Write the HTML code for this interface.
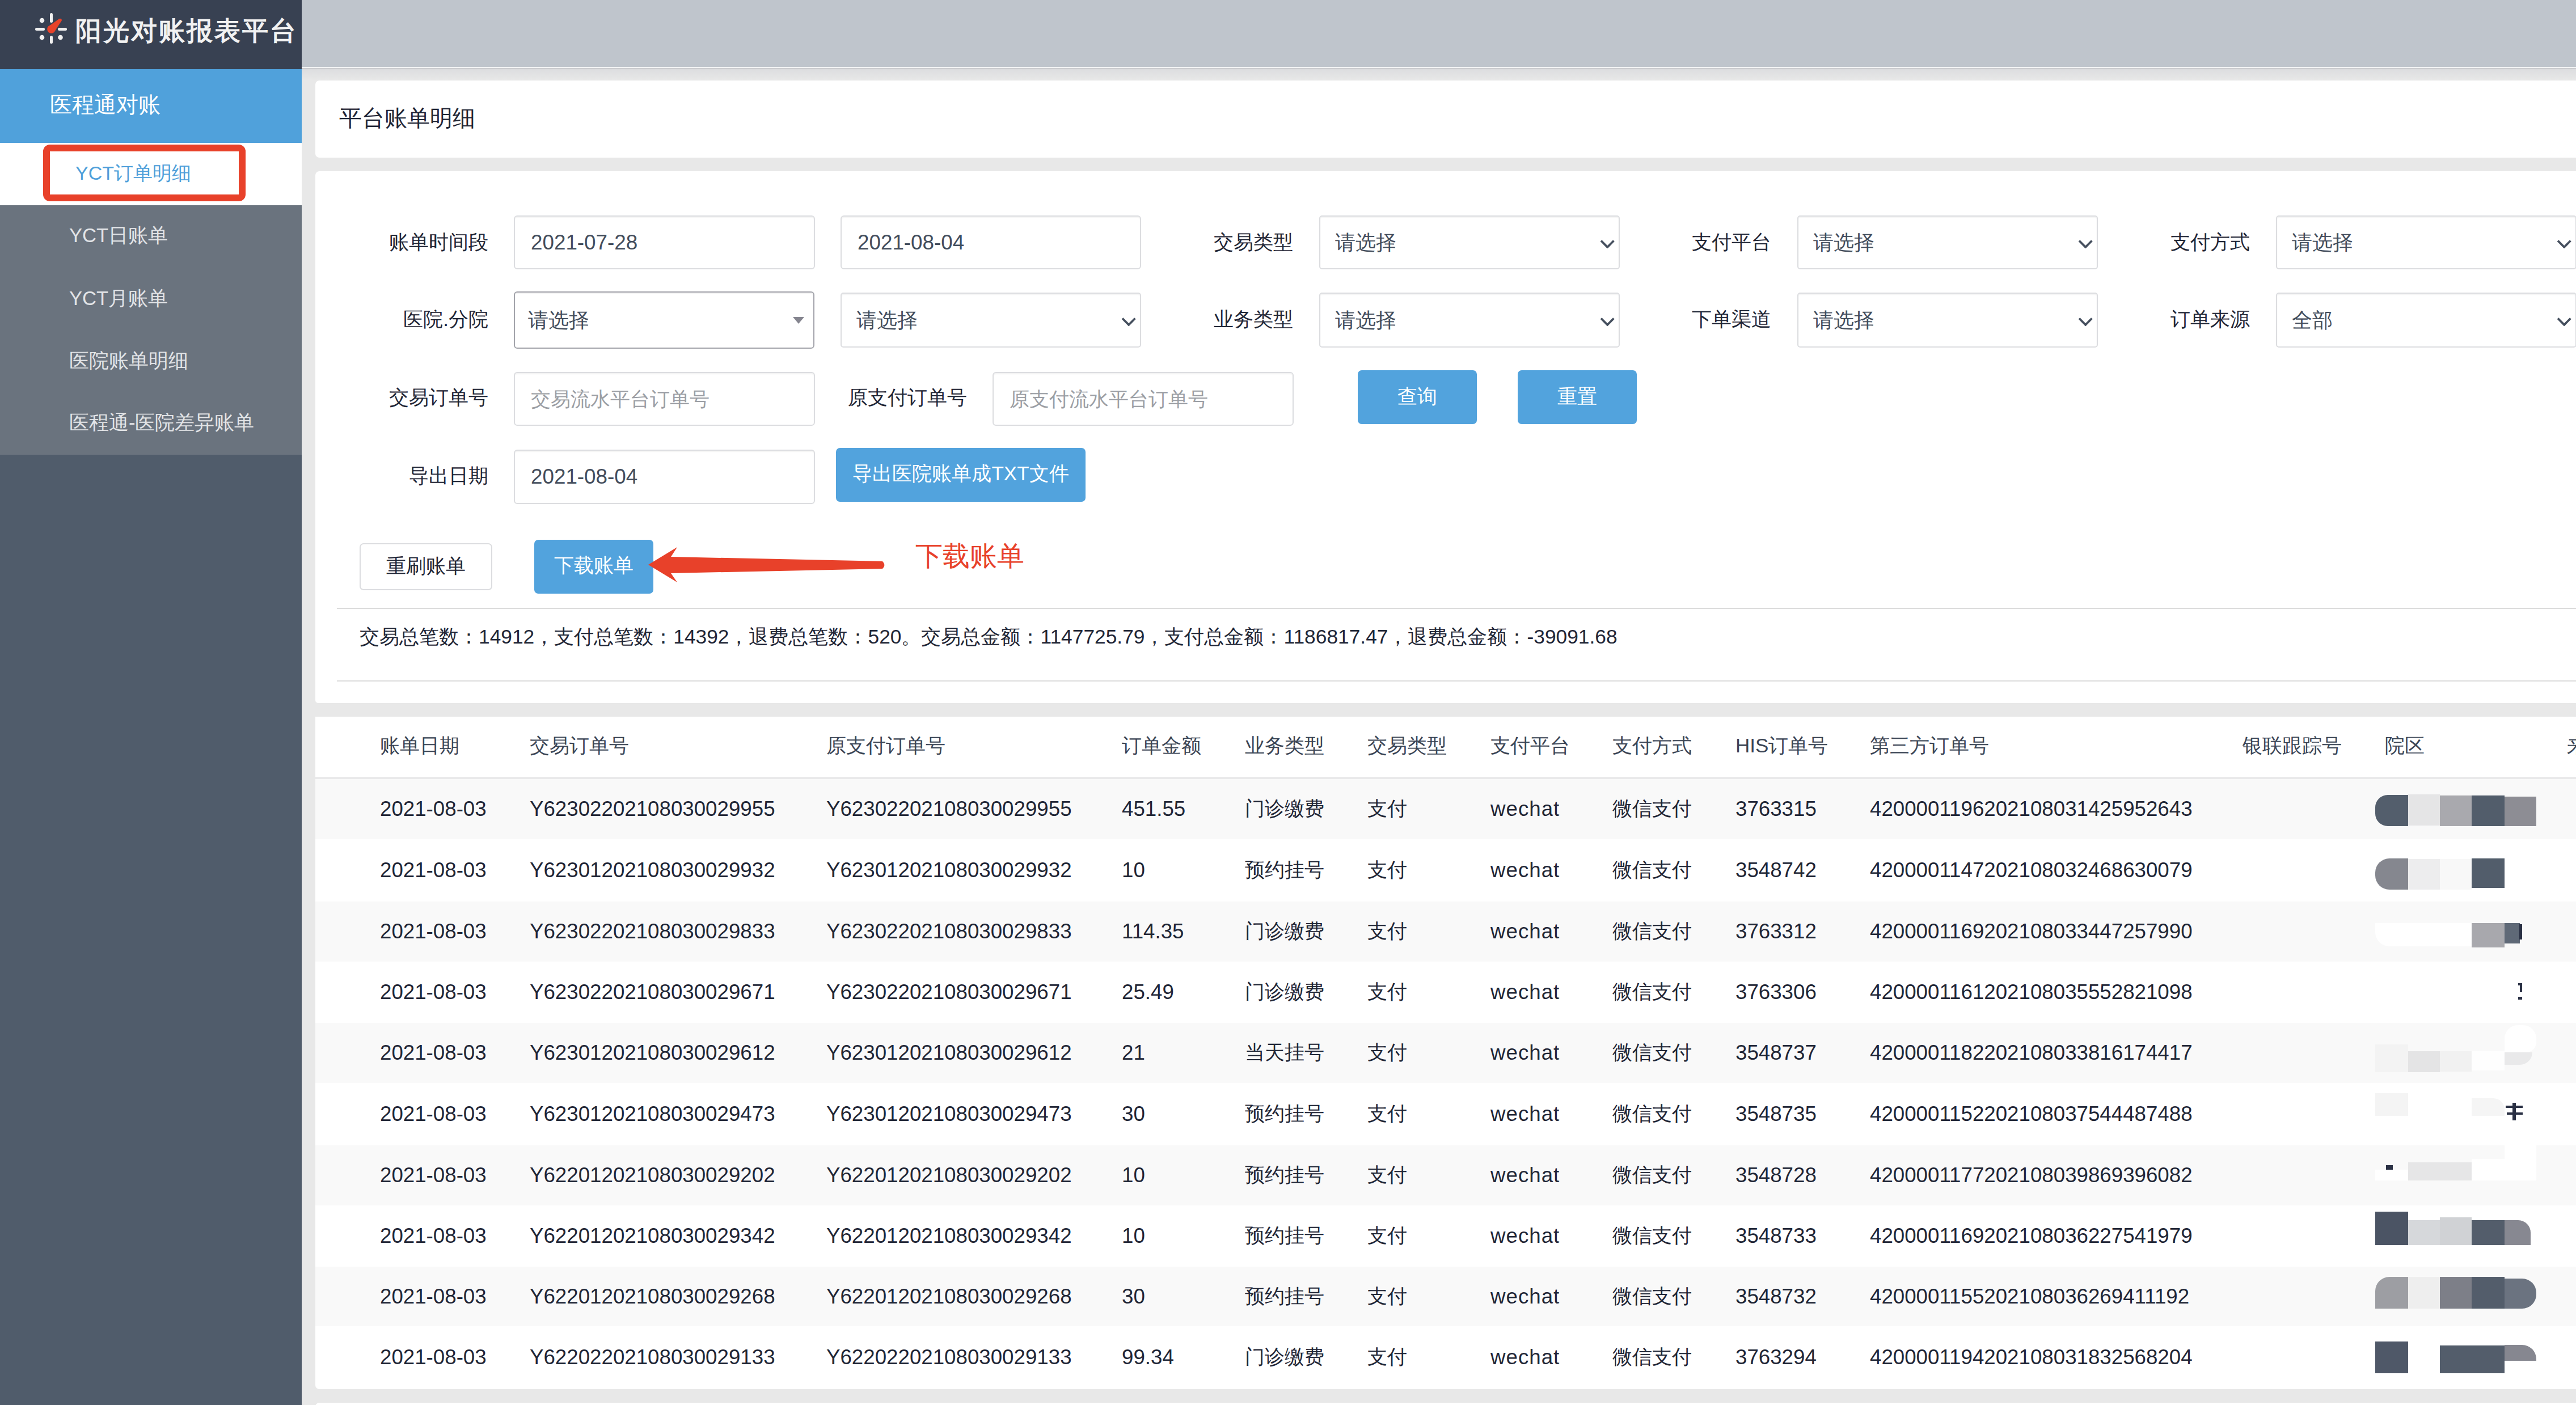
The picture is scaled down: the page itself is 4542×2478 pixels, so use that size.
<!DOCTYPE html>
<html><head><meta charset="utf-8">
<style>
*{box-sizing:border-box;margin:0;padding:0}
html,body{width:4542px;height:2478px;overflow:hidden}
body{position:relative;background:#e8e8e8;font-family:"Liberation Sans",sans-serif;color:#1f2636;line-height:1}
.a{position:absolute;white-space:nowrap}
.card{position:absolute;left:556px;width:4100px;background:#fff;border-radius:7px}
.lbl{position:absolute;font-size:35px;color:#1f2636;text-align:right;white-space:nowrap}
.inp{position:absolute;border:2px solid #dcdde0;border-radius:6px;background:#fff;box-shadow:inset 0 2px 2px rgba(0,0,0,.05)}
.inp span{position:absolute;left:28px;top:0;font-size:36px;color:#434d5c;white-space:nowrap}
.inp span.ph{color:#9b9ea4;font-size:35px}
.inp span.d{font-size:36.8px}
.chev{position:absolute;width:26px;height:16px}
.btn{position:absolute;background:#52a3dd;color:#fff;border-radius:7px;font-size:35px;text-align:center;white-space:nowrap}
.hr{position:absolute;left:594px;width:3948px;height:2px;background:#dcdcdc}
.th{position:absolute;top:1297px;font-size:35px;color:#3b4555;white-space:nowrap}
.row{position:absolute;left:556px;width:3986px}
.row.s{background:#f9f9f9}
.td{position:absolute;font-size:36.7px;color:#1f2636;white-space:nowrap}
.td.c{font-size:35px;margin-top:-1px}
.td.w{letter-spacing:1px}
.td.o{letter-spacing:0}
</style></head><body>
<div class="a" style="left:532px;top:0px;width:4010px;height:118px;background:#bfc5cc;"></div>
<div class="a" style="left:532px;top:118px;width:4010px;height:2px;background:#f2f3f4;"></div>
<div class="a" style="left:532px;top:120px;width:4010px;height:1px;background:#c4c5c8;"></div>
<div class="a" style="left:532px;top:121px;width:4010px;height:21px;background:linear-gradient(#dcdddf,#e8e8e8);"></div>
<div class="a" style="left:0px;top:0px;width:532px;height:122px;background:#384152;"></div>
<div class="a" style="left:0px;top:122px;width:532px;height:2356px;background:#505c6b;"></div>
<svg class="a" style="left:0;top:0" width="532" height="122" viewBox="0 0 532 122">
 <g fill="#f0f0f0">
  <rect x="88" y="23" width="5" height="17" rx="2.5"/>
  <rect x="88" y="63" width="5" height="14" rx="2.5"/>
  <rect x="62" y="49" width="17" height="5" rx="2.5"/>
  <rect x="102" y="49" width="16" height="5" rx="2.5"/>
  <circle cx="74" cy="36" r="4.3"/>
  <circle cx="74" cy="66" r="4.3"/>
  <circle cx="106.5" cy="66" r="4.3"/>
 </g>
 <circle cx="90.5" cy="51.5" r="7.3" fill="#e8432a"/><circle cx="106" cy="35.5" r="2.8" fill="#e8432a"/><path d="M87 45.5 L104.5 33 L108 37.5 L96.5 55 Z" fill="#e8432a"/>
</svg>
<div class="a" style="left:133px;top:31px;font-size:46px;color:#f2f2f2;letter-spacing:3px;-webkit-text-stroke:1.4px #f2f2f2">阳光对账报表平台</div>
<div class="a" style="left:0px;top:122px;width:532px;height:130px;background:#50a1db;"></div>
<div class="a" style="left:88px;top:165px;font-size:39px;color:#fff;">医程通对账</div>
<div class="a" style="left:0px;top:252px;width:532px;height:110px;background:#fff;"></div>
<div class="a" style="left:0px;top:362px;width:532px;height:440px;background:#6a737e;"></div>
<div class="a" style="left:133px;top:288px;font-size:34px;color:#4e9fda;">YCT订单明细</div>
<div class="a" style="left:76px;top:255px;width:357px;height:100px;border:12px solid #e8412a;border-radius:12px"></div>
<div class="a" style="left:122px;top:398px;font-size:34.5px;color:#e2e4e7;">YCT日账单</div>
<div class="a" style="left:122px;top:509px;font-size:34.5px;color:#e2e4e7;">YCT月账单</div>
<div class="a" style="left:122px;top:619px;font-size:34.5px;color:#e2e4e7;">医院账单明细</div>
<div class="a" style="left:122px;top:728px;font-size:34.5px;color:#e2e4e7;">医程通-医院差异账单</div>
<div class="card" style="top:142px;height:136px"></div>
<div class="a" style="left:598px;top:188px;font-size:40px;color:#1f2535;">平台账单明细</div>
<div class="card" style="top:302px;height:938px;border-radius:7px 7px 5px 5px"></div>
<div class="lbl" style="right:3681px;top:409px">账单时间段</div>
<div class="inp" style="left:906px;top:380px;width:531px;height:95px"><span class="d" style="left:28px;line-height:91px">2021-07-28</span></div>
<div class="inp" style="left:1482px;top:380px;width:530px;height:95px"><span class="d" style="left:28px;line-height:91px">2021-08-04</span></div>
<div class="lbl" style="right:2262px;top:409px">交易类型</div>
<div class="inp" style="border-radius:5px;left:2326px;top:380px;width:530px;height:95px"><span class="" style="left:26px;line-height:91px">请选择</span><svg class="chev" viewBox="0 0 26 16" style="left:492.8px;top:40.3px"><path d="M2 2.5 L13.2 13.9 L24.4 2.5" fill="none" stroke="#454f5e" stroke-width="3.8"/></svg></div>
<div class="lbl" style="right:1419px;top:409px">支付平台</div>
<div class="inp" style="border-radius:5px;left:3169px;top:380px;width:530px;height:95px"><span class="" style="left:26px;line-height:91px">请选择</span><svg class="chev" viewBox="0 0 26 16" style="left:492.8px;top:40.3px"><path d="M2 2.5 L13.2 13.9 L24.4 2.5" fill="none" stroke="#454f5e" stroke-width="3.8"/></svg></div>
<div class="lbl" style="right:575px;top:409px">支付方式</div>
<div class="inp" style="border-radius:5px;left:4013px;top:380px;width:530px;height:95px"><span class="" style="left:26px;line-height:91px">请选择</span><svg class="chev" viewBox="0 0 26 16" style="left:492.8px;top:40.3px"><path d="M2 2.5 L13.2 13.9 L24.4 2.5" fill="none" stroke="#454f5e" stroke-width="3.8"/></svg></div>
<div class="lbl" style="right:3681px;top:545px">医院.分院</div>
<div class="inp" style="left:906px;top:514px;width:530px;height:101px;border-color:#a2a3aa"><span class="" style="left:23px;line-height:97px">请选择</span><svg style="position:absolute;left:490px;top:42.5px" width="20" height="12"><path d="M0 0H20L10 12Z" fill="#85858f"/></svg></div>
<div class="inp" style="border-radius:5px;left:1482px;top:516px;width:530px;height:97px"><span class="" style="left:26px;line-height:93px">请选择</span><svg class="chev" viewBox="0 0 26 16" style="left:492.8px;top:41.3px"><path d="M2 2.5 L13.2 13.9 L24.4 2.5" fill="none" stroke="#454f5e" stroke-width="3.8"/></svg></div>
<div class="lbl" style="right:2262px;top:545px">业务类型</div>
<div class="inp" style="border-radius:5px;left:2326px;top:516px;width:530px;height:97px"><span class="" style="left:26px;line-height:93px">请选择</span><svg class="chev" viewBox="0 0 26 16" style="left:492.8px;top:41.3px"><path d="M2 2.5 L13.2 13.9 L24.4 2.5" fill="none" stroke="#454f5e" stroke-width="3.8"/></svg></div>
<div class="lbl" style="right:1419px;top:545px">下单渠道</div>
<div class="inp" style="border-radius:5px;left:3169px;top:516px;width:530px;height:97px"><span class="" style="left:26px;line-height:93px">请选择</span><svg class="chev" viewBox="0 0 26 16" style="left:492.8px;top:41.3px"><path d="M2 2.5 L13.2 13.9 L24.4 2.5" fill="none" stroke="#454f5e" stroke-width="3.8"/></svg></div>
<div class="lbl" style="right:575px;top:545px">订单来源</div>
<div class="inp" style="border-radius:5px;left:4013px;top:516px;width:530px;height:97px"><span class="" style="left:26px;line-height:93px">全部</span><svg class="chev" viewBox="0 0 26 16" style="left:492.8px;top:41.3px"><path d="M2 2.5 L13.2 13.9 L24.4 2.5" fill="none" stroke="#454f5e" stroke-width="3.8"/></svg></div>
<div class="lbl" style="right:3681px;top:683px">交易订单号</div>
<div class="inp" style="left:906px;top:656px;width:531px;height:95px"><span class="ph" style="left:28px;line-height:91px">交易流水平台订单号</span></div>
<div class="lbl" style="right:2837px;top:683px">原支付订单号</div>
<div class="inp" style="left:1750px;top:656px;width:531px;height:95px"><span class="ph" style="left:28px;line-height:91px">原支付流水平台订单号</span></div>
<div class="btn" style="left:2394px;top:653px;width:210px;height:95px;line-height:91px">查询</div>
<div class="btn" style="left:2676px;top:653px;width:210px;height:95px;line-height:91px">重置</div>
<div class="lbl" style="right:3681px;top:821px">导出日期</div>
<div class="inp" style="left:906px;top:793px;width:531px;height:96px"><span class="d" style="left:28px;line-height:92px">2021-08-04</span></div>
<div class="btn" style="left:1474px;top:790px;width:440px;height:95px;line-height:89px">导出医院账单成TXT文件</div>
<div class="btn" style="left:634px;top:958px;width:234px;height:83px;line-height:76px;background:#fff;border:2px solid #dcdde0;color:#1f2636">重刷账单</div>
<div class="btn" style="left:942px;top:952px;width:210px;height:95px;line-height:90px">下载账单</div>
<svg class="a" style="left:1130px;top:950px" width="440" height="90" viewBox="1130 950 440 90">
<path d="M1143 996 L1194 965 L1183 982 L1556 990 Q1563 996.5 1556 1003 L1183 1011 L1194 1027 Z" fill="#e8412a"/></svg>
<div class="a" style="left:1614px;top:957px;font-size:48px;color:#e8412a;">下载账单</div>
<div class="hr" style="top:1072px"></div>
<div class="a" style="left:634px;top:1105px;font-size:35.35px;color:#1f2636;">交易总笔数：14912，支付总笔数：14392，退费总笔数：520。交易总金额：1147725.79，支付总金额：1186817.47，退费总金额：-39091.68</div>
<div class="hr" style="top:1200px"></div>
<div class="card" style="top:1264px;height:1185.7px;border-radius:0 0 7px 7px"></div>
<div class="card" style="top:2474px;height:200px"></div>
<div class="th" style="left:670px">账单日期</div>
<div class="th" style="left:934px">交易订单号</div>
<div class="th" style="left:1457px">原支付订单号</div>
<div class="th" style="left:1978px">订单金额</div>
<div class="th" style="left:2195px">业务类型</div>
<div class="th" style="left:2411px">交易类型</div>
<div class="th" style="left:2628px">支付平台</div>
<div class="th" style="left:2843px">支付方式</div>
<div class="th" style="left:3060px">HIS订单号</div>
<div class="th" style="left:3297px">第三方订单号</div>
<div class="th" style="left:3954px">银联跟踪号</div>
<div class="th" style="left:4205px">院区</div>
<div class="th" style="left:4526px">来源</div>
<div class="a" style="left:556px;top:1370px;width:3986px;height:3.6px;background:#e9e9ea"></div>
<div class="row s" style="top:1373.6px;height:106.0px;line-height:106.0px">
<div class="td" style="left:114px">2021-08-03</div>
<div class="td o" style="left:378px">Y62302202108030029955</div>
<div class="td o" style="left:901px">Y62302202108030029955</div>
<div class="td" style="left:1422px">451.55</div>
<div class="td c" style="left:1639px">门诊缴费</div>
<div class="td c" style="left:1855px">支付</div>
<div class="td w" style="left:2072px">wechat</div>
<div class="td c" style="left:2287px">微信支付</div>
<div class="td" style="left:2504px">3763315</div>
<div class="td" style="left:2741px">4200001196202108031425952643</div>
</div>
<div class="row" style="top:1479.6px;height:110.2px;line-height:110.2px">
<div class="td" style="left:114px">2021-08-03</div>
<div class="td o" style="left:378px">Y62301202108030029932</div>
<div class="td o" style="left:901px">Y62301202108030029932</div>
<div class="td" style="left:1422px">10</div>
<div class="td c" style="left:1639px">预约挂号</div>
<div class="td c" style="left:1855px">支付</div>
<div class="td w" style="left:2072px">wechat</div>
<div class="td c" style="left:2287px">微信支付</div>
<div class="td" style="left:2504px">3548742</div>
<div class="td" style="left:2741px">4200001147202108032468630079</div>
</div>
<div class="row s" style="top:1589.8px;height:106.0px;line-height:106.0px">
<div class="td" style="left:114px">2021-08-03</div>
<div class="td o" style="left:378px">Y62302202108030029833</div>
<div class="td o" style="left:901px">Y62302202108030029833</div>
<div class="td" style="left:1422px">114.35</div>
<div class="td c" style="left:1639px">门诊缴费</div>
<div class="td c" style="left:1855px">支付</div>
<div class="td w" style="left:2072px">wechat</div>
<div class="td c" style="left:2287px">微信支付</div>
<div class="td" style="left:2504px">3763312</div>
<div class="td" style="left:2741px">4200001169202108033447257990</div>
</div>
<div class="row" style="top:1695.8px;height:107.8px;line-height:107.8px">
<div class="td" style="left:114px">2021-08-03</div>
<div class="td o" style="left:378px">Y62302202108030029671</div>
<div class="td o" style="left:901px">Y62302202108030029671</div>
<div class="td" style="left:1422px">25.49</div>
<div class="td c" style="left:1639px">门诊缴费</div>
<div class="td c" style="left:1855px">支付</div>
<div class="td w" style="left:2072px">wechat</div>
<div class="td c" style="left:2287px">微信支付</div>
<div class="td" style="left:2504px">3763306</div>
<div class="td" style="left:2741px">4200001161202108035552821098</div>
</div>
<div class="row s" style="top:1803.6px;height:106.3px;line-height:106.3px">
<div class="td" style="left:114px">2021-08-03</div>
<div class="td o" style="left:378px">Y62301202108030029612</div>
<div class="td o" style="left:901px">Y62301202108030029612</div>
<div class="td" style="left:1422px">21</div>
<div class="td c" style="left:1639px">当天挂号</div>
<div class="td c" style="left:1855px">支付</div>
<div class="td w" style="left:2072px">wechat</div>
<div class="td c" style="left:2287px">微信支付</div>
<div class="td" style="left:2504px">3548737</div>
<div class="td" style="left:2741px">4200001182202108033816174417</div>
</div>
<div class="row" style="top:1909.9px;height:110.1px;line-height:110.1px">
<div class="td" style="left:114px">2021-08-03</div>
<div class="td o" style="left:378px">Y62301202108030029473</div>
<div class="td o" style="left:901px">Y62301202108030029473</div>
<div class="td" style="left:1422px">30</div>
<div class="td c" style="left:1639px">预约挂号</div>
<div class="td c" style="left:1855px">支付</div>
<div class="td w" style="left:2072px">wechat</div>
<div class="td c" style="left:2287px">微信支付</div>
<div class="td" style="left:2504px">3548735</div>
<div class="td" style="left:2741px">4200001152202108037544487488</div>
</div>
<div class="row s" style="top:2020px;height:105.6px;line-height:105.6px">
<div class="td" style="left:114px">2021-08-03</div>
<div class="td o" style="left:378px">Y62201202108030029202</div>
<div class="td o" style="left:901px">Y62201202108030029202</div>
<div class="td" style="left:1422px">10</div>
<div class="td c" style="left:1639px">预约挂号</div>
<div class="td c" style="left:1855px">支付</div>
<div class="td w" style="left:2072px">wechat</div>
<div class="td c" style="left:2287px">微信支付</div>
<div class="td" style="left:2504px">3548728</div>
<div class="td" style="left:2741px">4200001177202108039869396082</div>
</div>
<div class="row" style="top:2125.6px;height:108.1px;line-height:108.1px">
<div class="td" style="left:114px">2021-08-03</div>
<div class="td o" style="left:378px">Y62201202108030029342</div>
<div class="td o" style="left:901px">Y62201202108030029342</div>
<div class="td" style="left:1422px">10</div>
<div class="td c" style="left:1639px">预约挂号</div>
<div class="td c" style="left:1855px">支付</div>
<div class="td w" style="left:2072px">wechat</div>
<div class="td c" style="left:2287px">微信支付</div>
<div class="td" style="left:2504px">3548733</div>
<div class="td" style="left:2741px">4200001169202108036227541979</div>
</div>
<div class="row s" style="top:2233.7px;height:105.7px;line-height:105.7px">
<div class="td" style="left:114px">2021-08-03</div>
<div class="td o" style="left:378px">Y62201202108030029268</div>
<div class="td o" style="left:901px">Y62201202108030029268</div>
<div class="td" style="left:1422px">30</div>
<div class="td c" style="left:1639px">预约挂号</div>
<div class="td c" style="left:1855px">支付</div>
<div class="td w" style="left:2072px">wechat</div>
<div class="td c" style="left:2287px">微信支付</div>
<div class="td" style="left:2504px">3548732</div>
<div class="td" style="left:2741px">4200001155202108036269411192</div>
</div>
<div class="row" style="top:2339.4px;height:110.3px;line-height:110.3px">
<div class="td" style="left:114px">2021-08-03</div>
<div class="td o" style="left:378px">Y62202202108030029133</div>
<div class="td o" style="left:901px">Y62202202108030029133</div>
<div class="td" style="left:1422px">99.34</div>
<div class="td c" style="left:1639px">门诊缴费</div>
<div class="td c" style="left:1855px">支付</div>
<div class="td w" style="left:2072px">wechat</div>
<div class="td c" style="left:2287px">微信支付</div>
<div class="td" style="left:2504px">3763294</div>
<div class="td" style="left:2741px">4200001194202108031832568204</div>
</div>
<div class="a" style="left:4188px;top:1402px;width:58px;height:55px;background:#535e6c;border-radius:22px 0 0 22px"></div>
<div class="a" style="left:4246px;top:1401px;width:56px;height:55px;background:#e5e5e6;"></div>
<div class="a" style="left:4302px;top:1403px;width:56px;height:54px;background:#a9a9ae;"></div>
<div class="a" style="left:4358px;top:1403px;width:58px;height:54px;background:#525d6b;"></div>
<div class="a" style="left:4416px;top:1405px;width:56px;height:52px;background:#8d8d94;"></div>
<div class="a" style="left:4188px;top:1514px;width:58px;height:55px;background:#85878f;border-radius:25px 0 0 25px"></div>
<div class="a" style="left:4246px;top:1515px;width:56px;height:54px;background:#ededee;"></div>
<div class="a" style="left:4302px;top:1515px;width:56px;height:54px;background:#f8f8f8;"></div>
<div class="a" style="left:4358px;top:1514px;width:58px;height:52px;background:#525d6b;"></div>
<div class="a" style="left:4188px;top:1628px;width:170px;height:41px;background:#ffffff;border-radius:0 0 0 25px"></div>
<div class="a" style="left:4358px;top:1628px;width:58px;height:43px;background:#a8a8ad;"></div>
<div class="a" style="left:4416px;top:1628px;width:27px;height:36px;background:#5f6977;"></div>
<div class="a" style="left:4442px;top:1630px;width:5px;height:27px;background:#2a3044;"></div>
<div class="a" style="left:4440px;top:1734px;width:7px;height:4px;background:#2a3044;"></div>
<div class="a" style="left:4443px;top:1738px;width:4px;height:12px;background:#2a3044;"></div>
<div class="a" style="left:4440px;top:1758px;width:7px;height:5px;background:#2a3044;"></div>
<div class="a" style="left:4416px;top:1808px;width:56px;height:48px;background:#ffffff;border-radius:24px 24px 18px 0"></div>
<div class="a" style="left:4188px;top:1842px;width:58px;height:49px;background:#f3f3f3;"></div>
<div class="a" style="left:4246px;top:1854px;width:56px;height:37px;background:#e4e4e5;"></div>
<div class="a" style="left:4302px;top:1854px;width:56px;height:36px;background:#f1f1f1;"></div>
<div class="a" style="left:4358px;top:1854px;width:58px;height:34px;background:#fefefe;"></div>
<div class="a" style="left:4416px;top:1856px;width:49px;height:22px;background:#e9e9ea;border-radius:0 0 30px 0"></div>
<div class="a" style="left:4188px;top:1928px;width:58px;height:40px;background:#f4f4f4;"></div>
<div class="a" style="left:4358px;top:1937px;width:58px;height:31px;background:#f5f5f5;border-radius:0 20px 0 0"></div>
<div class="a" style="left:4418px;top:1950px;width:30px;height:4px;background:#2a3044;"></div>
<div class="a" style="left:4430px;top:1945px;width:6px;height:31px;background:#2a3044;"></div>
<div class="a" style="left:4420px;top:1962px;width:28px;height:4px;background:#2a3044;"></div>
<div class="a" style="left:4416px;top:2020px;width:56px;height:62px;background:#ffffff;"></div>
<div class="a" style="left:4358px;top:2044px;width:58px;height:38px;background:#ffffff;"></div>
<div class="a" style="left:4246px;top:2050px;width:112px;height:32px;background:#e6e6e7;"></div>
<div class="a" style="left:4188px;top:2063px;width:58px;height:19px;background:#ffffff;"></div>
<div class="a" style="left:4207px;top:2055px;width:12px;height:8px;background:#2a3044;"></div>
<div class="a" style="left:4188px;top:2137px;width:58px;height:59px;background:#4b5464;"></div>
<div class="a" style="left:4246px;top:2152px;width:56px;height:44px;background:#d6d8db;"></div>
<div class="a" style="left:4302px;top:2147px;width:56px;height:49px;background:#d0d2d5;"></div>
<div class="a" style="left:4358px;top:2152px;width:58px;height:44px;background:#535d6b;"></div>
<div class="a" style="left:4416px;top:2152px;width:46px;height:44px;background:#878891;border-radius:0 22px 0 0"></div>
<div class="a" style="left:4188px;top:2252px;width:58px;height:56px;background:#9d9ea3;border-radius:25px 0 0 0"></div>
<div class="a" style="left:4246px;top:2252px;width:56px;height:56px;background:#eeeeee;"></div>
<div class="a" style="left:4302px;top:2252px;width:56px;height:56px;background:#7d7f88;"></div>
<div class="a" style="left:4358px;top:2252px;width:58px;height:56px;background:#535d6b;"></div>
<div class="a" style="left:4416px;top:2255px;width:56px;height:53px;background:#6b7380;border-radius:0 25px 25px 0"></div>
<div class="a" style="left:4188px;top:2366px;width:58px;height:56px;background:#4f5868;"></div>
<div class="a" style="left:4302px;top:2373px;width:114px;height:49px;background:#535d6b;"></div>
<div class="a" style="left:4416px;top:2372px;width:56px;height:28px;background:#868790;border-radius:0 25px 0 0"></div>
</body></html>
